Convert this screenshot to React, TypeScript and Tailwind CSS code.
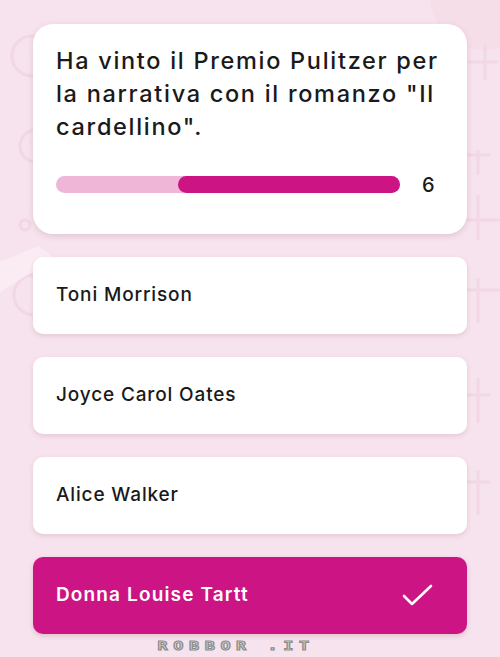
import React from "react";

const options = ["Toni Morrison", "Joyce Carol Oates", "Alice Walker"];

function Decor() {
  return (
    <svg className="absolute inset-0 pointer-events-none" width="500" height="657" viewBox="0 0 500 657">
      <g fill="none" stroke="#f0d2e2" strokeWidth="3" opacity="0.7">
        <circle cx="32" cy="56" r="20" />
        <circle cx="36" cy="146" r="16" />
        <circle cx="25" cy="225" r="5" />
        <circle cx="34" cy="295" r="20" />
        <path d="M485 45 v35 M468 62 h30" />
        <path d="M478 150 v25 M465 155 h25" />
        <path d="M478 195 v45 M460 220 h40" />
        <path d="M478 278 v45 M460 290 h40" />
        <path d="M478 378 v45 M460 395 h30" />
        <path d="M478 470 v45 M460 482 h30" />
      </g>
      <path d="M0 262 L38 246 L55 258 L0 292 Z" fill="#fbedf4" opacity="0.8" />
      <circle cx="485" cy="-5" r="55" fill="#f3d6e5" opacity="0.45" />
    </svg>
  );
}

export default function App() {
  return (
    <div
      className="relative w-[500px] h-[657px] overflow-hidden bg-[#f7e3ed]"
      style={{ fontFamily: "Inter, 'Open Sans', sans-serif" }}
    >
      <Decor />
      <div className="relative flex flex-col px-[33px] pt-[24px]">
        <div className="bg-white rounded-[20px] shadow-[0_2px_6px_rgba(120,60,90,0.18)] pt-[20px] pb-[41px] px-[23px] flex flex-col">
          <div className="text-[23.5px] leading-[33px] font-medium text-[#1a1a1a] tracking-[1.7px]">
            Ha vinto il Premio Pulitzer per la narrativa con il romanzo "Il cardellino".
          </div>
          <div className="mt-[33px] h-[17px] flex items-center">
            <div className="w-[344px] h-[17px] rounded-full bg-[#efb6d8] flex justify-end">
              <div className="w-[222px] h-[17px] rounded-full bg-[#cc1485]" />
            </div>
            <div className="ml-[22px] text-[20px] font-medium text-[#1a1a1a] leading-none">6</div>
          </div>
        </div>

        <div className="mt-[23px] flex flex-col gap-[23px]">
          {options.map((o) => (
            <div
              key={o}
              className="h-[77px] bg-white rounded-[10px] shadow-[0_2px_5px_rgba(120,60,90,0.16)] flex items-center px-[23px] text-[19px] font-medium text-[#1a1a1a] tracking-[0.045em]"
            >
              {o}
            </div>
          ))}
          <div className="h-[77px] bg-[#cc1485] rounded-[10px] shadow-[0_2px_5px_rgba(120,60,90,0.2)] flex items-center justify-between pl-[23px] pr-[33px] text-[19px] font-semibold text-white tracking-[0.06em]">
            <span>Donna Louise Tartt</span>
            <svg width="32" height="24" viewBox="0 0 32 24" fill="none">
              <path d="M2 12 L10 20 L29 2" stroke="white" strokeWidth="2.6" strokeLinecap="round" strokeLinejoin="round" />
            </svg>
          </div>
        </div>

        <div className="mt-[6px] flex justify-center pr-[28px]">
          <span
            className="inline-block scale-x-[1.4] text-[12px] leading-[12px] tracking-[4px] text-[#dcdcdc] font-bold"
            style={{ fontFamily: "'DejaVu Sans Mono', monospace", WebkitTextStroke: "1px #8c8c8c" }}
          >
            ROBBOR .IT
          </span>
        </div>
      </div>
    </div>
  );
}
